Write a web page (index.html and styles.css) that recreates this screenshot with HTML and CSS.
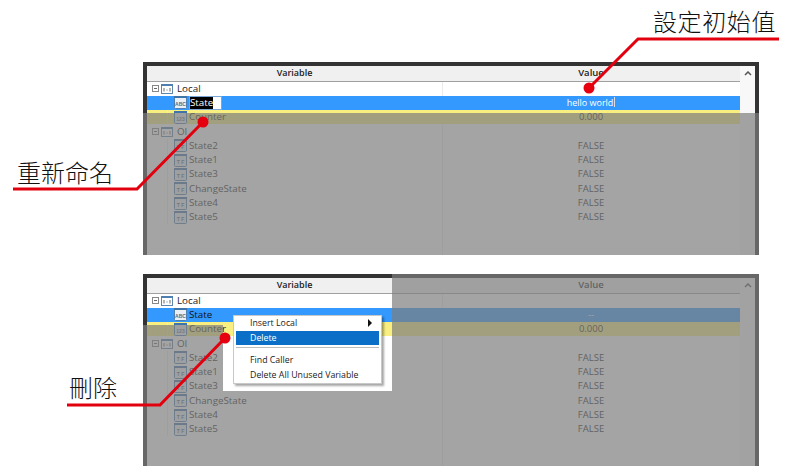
FILE: index.html
```html
<!DOCTYPE html>
<html lang="en">
<head>
    <meta charset="UTF-8">
    <title>Local variable editing</title>
    <link rel="stylesheet" href="styles.css">
</head>
<body>
<svg class="defs" width="0" height="0">
    <symbol id="icon-group" viewBox="0 0 12 10">
        <rect x="0.5" y="0.5" width="11" height="9" fill="#fff" stroke="#5f86ad"/>
        <rect x="0" y="0" width="12" height="2" fill="#4f7fae"/>
        <path d="M3 4v3.500M5.500 6h1M9 4v3.500" stroke="#6a6a6a" fill="none"/>
    </symbol>
    <symbol id="icon-frame" viewBox="0 0 13 13">
        <rect x="0.500" y="0.500" width="12" height="12" rx="1" fill="#e8eff6" stroke="#4f7fae"/>
        <rect x="0" y="0" width="13" height="2" fill="#3f74a8"/>
    </symbol>
</svg>

<div class="page">
    <div class="shot">
        <div class="panel">
            <div class="list">
                <div class="head"><div class="col-name">Variable</div><div class="col-value">Value</div></div>
                <div class="row"><div class="col-name group"><span class="toggle"></span><svg class="icon-wide"><use href="#icon-group"/></svg>Local</div><div class="col-value"></div></div>
                <div class="row row-blue"><div class="col-name child"><svg class="icon" viewBox="0 0 13 13"><use href="#icon-frame"/><text x="6.500" y="9.500" class="icon-text">ABC</text></svg><span class="rename"><span class="rename-sel">State</span></span></div><div class="col-value value-edit">hello world<span class="caret"></span></div></div>
                <div class="row row-yellow"><div class="col-name child"><svg class="icon" viewBox="0 0 13 13"><use href="#icon-frame"/><text x="6.500" y="9.500" class="icon-text">123</text></svg>Counter</div><div class="col-value">0.000</div></div>
                <div class="row"><div class="col-name group"><span class="toggle"></span><svg class="icon-wide"><use href="#icon-group"/></svg>OI</div><div class="col-value"></div></div>
                <div class="row"><div class="col-name child"><svg class="icon" viewBox="0 0 13 13"><use href="#icon-frame"/><text x="6.500" y="9.500" class="icon-text">T F</text></svg>State2</div><div class="col-value">FALSE</div></div>
                <div class="row"><div class="col-name child"><svg class="icon" viewBox="0 0 13 13"><use href="#icon-frame"/><text x="6.500" y="9.500" class="icon-text">T F</text></svg>State1</div><div class="col-value">FALSE</div></div>
                <div class="row"><div class="col-name child"><svg class="icon" viewBox="0 0 13 13"><use href="#icon-frame"/><text x="6.500" y="9.500" class="icon-text">T F</text></svg>State3</div><div class="col-value">FALSE</div></div>
                <div class="row"><div class="col-name child"><svg class="icon" viewBox="0 0 13 13"><use href="#icon-frame"/><text x="6.500" y="9.500" class="icon-text">T F</text></svg>ChangeState</div><div class="col-value">FALSE</div></div>
                <div class="row"><div class="col-name child"><svg class="icon" viewBox="0 0 13 13"><use href="#icon-frame"/><text x="6.500" y="9.500" class="icon-text">T F</text></svg>State4</div><div class="col-value">FALSE</div></div>
                <div class="row"><div class="col-name child"><svg class="icon" viewBox="0 0 13 13"><use href="#icon-frame"/><text x="6.500" y="9.500" class="icon-text">T F</text></svg>State5</div><div class="col-value">FALSE</div></div>
            </div>
            <div class="scrollbar"><svg class="chevron" viewBox="0 0 8 5"><path d="M1 4l3-3 3 3" fill="none" stroke="#555" stroke-width="1.500"/></svg></div>
        </div>
        <div class="dim dim-lower"></div>
    </div>

    <div class="shot">
        <div class="panel">
            <div class="list">
                <div class="head"><div class="col-name">Variable</div><div class="col-value">Value</div></div>
                <div class="row"><div class="col-name group"><span class="toggle"></span><svg class="icon-wide"><use href="#icon-group"/></svg>Local</div><div class="col-value"></div></div>
                <div class="row row-blue"><div class="col-name child"><svg class="icon" viewBox="0 0 13 13"><use href="#icon-frame"/><text x="6.500" y="9.500" class="icon-text">ABC</text></svg>State</div><div class="col-value">--</div></div>
                <div class="row row-yellow"><div class="col-name child"><svg class="icon" viewBox="0 0 13 13"><use href="#icon-frame"/><text x="6.500" y="9.500" class="icon-text">123</text></svg>Counter</div><div class="col-value">0.000</div></div>
                <div class="row"><div class="col-name group"><span class="toggle"></span><svg class="icon-wide"><use href="#icon-group"/></svg>OI</div><div class="col-value"></div></div>
                <div class="row"><div class="col-name child"><svg class="icon" viewBox="0 0 13 13"><use href="#icon-frame"/><text x="6.500" y="9.500" class="icon-text">T F</text></svg>State2</div><div class="col-value">FALSE</div></div>
                <div class="row"><div class="col-name child"><svg class="icon" viewBox="0 0 13 13"><use href="#icon-frame"/><text x="6.500" y="9.500" class="icon-text">T F</text></svg>State1</div><div class="col-value">FALSE</div></div>
                <div class="row"><div class="col-name child"><svg class="icon" viewBox="0 0 13 13"><use href="#icon-frame"/><text x="6.500" y="9.500" class="icon-text">T F</text></svg>State3</div><div class="col-value">FALSE</div></div>
                <div class="row"><div class="col-name child"><svg class="icon" viewBox="0 0 13 13"><use href="#icon-frame"/><text x="6.500" y="9.500" class="icon-text">T F</text></svg>ChangeState</div><div class="col-value">FALSE</div></div>
                <div class="row"><div class="col-name child"><svg class="icon" viewBox="0 0 13 13"><use href="#icon-frame"/><text x="6.500" y="9.500" class="icon-text">T F</text></svg>State4</div><div class="col-value">FALSE</div></div>
                <div class="row"><div class="col-name child"><svg class="icon" viewBox="0 0 13 13"><use href="#icon-frame"/><text x="6.500" y="9.500" class="icon-text">T F</text></svg>State5</div><div class="col-value">FALSE</div></div>
            </div>
            <div class="scrollbar"><svg class="chevron" viewBox="0 0 8 5"><path d="M1 4l3-3 3 3" fill="none" stroke="#555" stroke-width="1.500"/></svg></div>
        </div>
        <div class="dim dim-around-menu"></div>
        <div class="menu">
            <div class="menu-item">Insert Local<span class="menu-arrow"></span></div>
            <div class="menu-item menu-item-active">Delete</div>
            <div class="menu-sep"></div>
            <div class="menu-item">Find Caller</div>
            <div class="menu-item">Delete All Unused Variable</div>
        </div>
    </div>
</div>

<svg class="callouts" width="793" height="466" viewBox="0 0 793 466">
    <path d="M779 39H638L589 88"/>
    <circle cx="589" cy="88" r="5.500"/>
    <path d="M13 189H137L203 122"/>
    <circle cx="203" cy="122" r="5.500"/>
    <path d="M67 405H160L225 338"/>
    <circle cx="225" cy="338" r="5.500"/>
</svg>
<div class="label label-init">設定初始值</div>
<div class="label label-rename">重新命名</div>
<div class="label label-delete">刪除</div>
</body>
</html>
```

FILE: styles.css
```css
body, html {
    margin: 0;
    padding: 0;
    width: 100%;
    height: 100%;
    overflow: hidden;
    background-color: #fff;
    font-family: "Open Sans", "Noto Sans", sans-serif;
}

.defs {
    position: absolute;
}

.icon-text {
    font-family: "Liberation Sans", sans-serif;
    font-size: 5px;
    font-weight: bold;
    text-anchor: middle;
    fill: #5a6b7c;
}

.page {
    display: flex;
    flex-direction: column;
    gap: 19px;
    padding: 62px 34px 0 143px;
}

.shot {
    position: relative;
    height: 193px;
}

.panel {
    display: flex;
    box-sizing: border-box;
    height: 100%;
    border: 4px solid #333;
    border-bottom: 0;
    background-color: #fff;
}

.list {
    flex: 1;
    background: linear-gradient(#ececec, #ececec) 295px 0 / 1px 100% no-repeat;
}

.scrollbar {
    display: flex;
    justify-content: center;
    width: 15px;
    background-color: #f8f8f8;
}

.chevron {
    width: 8px;
    height: 5px;
    margin-top: 5px;
}

.head {
    display: flex;
    height: 14.500px;
    border-bottom: 1px solid #a0a0a0;
    background-color: #f0f0f0;
    color: #222;
    font-size: 9px;
    font-weight: 600;
    line-height: 14px;
    text-align: center;
}

.row {
    display: flex;
    height: 14.300px;
    color: #222;
    font-size: 9.800px;
    line-height: 14px;
}

.row-blue {
    background-color: #3399ff;
    color: #fff;
}

.row-blue .child {
    color: #111;
}

.row-yellow {
    background-color: #f8ef80;
}

.col-name {
    display: flex;
    align-items: center;
    box-sizing: border-box;
    width: 295px;
    justify-content: center;
}

.col-value {
    width: 298px;
    font-size: 9.500px;
    text-align: center;
}

.value-edit {
    font-size: 9px;
}

.group,
.child {
    justify-content: flex-start;
    white-space: nowrap;
}

.group {
    padding-left: 5px;
}

.child {
    padding-left: 27px;
    background: linear-gradient(#eaeaea, #eaeaea) 20px 0 / 1px 100% no-repeat;
}

.row-blue .child {
    background-image: none;
}

.toggle {
    box-sizing: border-box;
    width: 7px;
    height: 7px;
    margin-right: 2px;
    border: 1px solid #888;
    background: linear-gradient(#666, #666) center / 3px 1px no-repeat;
}

.icon-wide {
    width: 12px;
    height: 10px;
    margin-right: 4px;
}

.icon {
    width: 13px;
    height: 13px;
    margin-right: 2px;
}

.rename {
    display: flex;
    align-items: center;
    box-sizing: border-box;
    width: 33px;
    height: 14px;
    border: 1px solid #7aa7d6;
    background-color: #fff;
}

.rename-sel {
    background-color: #000;
    color: #fff;
    line-height: 12px;
}

.caret {
    display: inline-block;
    width: 1px;
    height: 10px;
    margin-left: 1px;
    vertical-align: -1px;
    background-color: #ddd;
}

/* grey veil over everything except what the step is about */
.dim {
    position: absolute;
    background-color: rgba(125, 125, 125, .7);
}

.dim-lower {
    top: 51px;
    right: 0;
    bottom: 0;
    left: 0;
}

.dim-around-menu {
    top: 0;
    right: 0;
    bottom: 0;
    left: 0;
    clip-path: polygon(249px 0, 616px 0, 616px 193px, 0 193px, 0 51px, 80px 51px, 80px 117px, 249px 117px);
}

.menu {
    position: absolute;
    top: 41px;
    left: 90px;
    box-sizing: border-box;
    width: 149px;
    height: 69px;
    padding: 0 2px;
    border: 1px solid #c8c8c8;
    background-color: #fff;
    box-shadow: 2px 2px 2px rgba(0, 0, 0, .35);
    color: #222;
    font-size: 8.800px;
}

.menu-item {
    display: flex;
    align-items: center;
    justify-content: space-between;
    height: 14.500px;
    padding: 0 7px 0 14px;
}

.menu-item-active {
    background-color: #0b6fc7;
    color: #fff;
}

.menu-sep {
    height: 1px;
    margin: 2px 0 5px;
    background-color: #bbb;
}

.menu-arrow {
    width: 0;
    height: 0;
    border-top: 4px solid transparent;
    border-bottom: 4px solid transparent;
    border-left: 4px solid #111;
}

.callouts {
    position: absolute;
    top: 0;
    left: 0;
}

.callouts path {
    fill: none;
    stroke: #e2000f;
    stroke-width: 3;
}

.callouts circle {
    fill: #e6000f;
}

.label {
    position: absolute;
    color: #111;
    font-family: "Noto Sans CJK TC", sans-serif;
    font-size: 24px;
    font-weight: 300;
    line-height: 28px;
    white-space: nowrap;
}

.label-init {
    top: 7px;
    left: 653px;
    letter-spacing: .6px;
}

.label-rename {
    top: 158px;
    left: 17px;
}

.label-delete {
    top: 373px;
    left: 69px;
}
```
